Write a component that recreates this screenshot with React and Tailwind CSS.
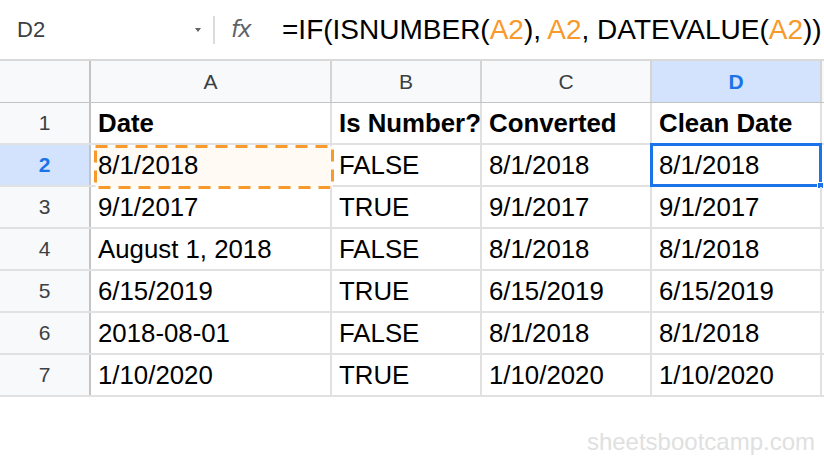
import React from 'react';

const cols = [
  { key: 'A', w: 'w-[241px]' },
  { key: 'B', w: 'w-[150px]' },
  { key: 'C', w: 'w-[170px]' },
  { key: 'D', w: 'w-[170px]' },
];

const rows = [
  ['Date', 'Is Number?', 'Converted', 'Clean Date'],
  ['8/1/2018', 'FALSE', '8/1/2018', '8/1/2018'],
  ['9/1/2017', 'TRUE', '9/1/2017', '9/1/2017'],
  ['August 1, 2018', 'FALSE', '8/1/2018', '8/1/2018'],
  ['6/15/2019', 'TRUE', '6/15/2019', '6/15/2019'],
  ['2018-08-01', 'FALSE', '8/1/2018', '8/1/2018'],
  ['1/10/2020', 'TRUE', '1/10/2020', '1/10/2020'],
];

const Ref = ({ children }) => <span className="text-[#f79a2b]">{children}</span>;

// copy marquee around A2
const Marquee = () => (
  <svg className="absolute left-[3px] top-[0px]" width="240" height="44" viewBox="0 0 240 44">
    <rect x="1.5" y="1.5" width="237" height="41" fill="#fffaf3" stroke="#f79a2b" strokeWidth="3" strokeDasharray="12 8" />
  </svg>
);

export default function App() {
  return (
    <div className="w-[824px] h-[458px] bg-white relative overflow-hidden font-['Liberation_Sans',Arial,sans-serif] text-black">
      {/* Formula bar */}
      <div className="h-[59px] flex items-center">
        <div className="w-[213px] flex items-center pl-[17px] pr-[12px] text-[22px] text-[#3c4043]">
          <span className="flex-1">D2</span>
          <span className="w-0 h-0 border-l-[3px] border-r-[3px] border-t-[4px] border-l-transparent border-r-transparent border-t-[#5f6368] mt-[1px]" />
        </div>
        <div className="w-[2px] h-[28px] bg-[#dadce0]" />
        <span className="ml-[16px] w-[51px] text-[23px] italic text-[#5f6368] font-['DejaVu_Sans',sans-serif] tracking-[-1px]">fx</span>
        <span className="text-[28px] whitespace-nowrap">
          =IF(ISNUMBER(<Ref>A2</Ref>), <Ref>A2</Ref>, DATEVALUE(<Ref>A2</Ref>))
        </span>
      </div>

      {/* Grid */}
      <div className="border-t-2 border-[#d9d9d9]">
        <div className="flex h-[42px] border-b border-[#c4c4c4] bg-[#f8f9fa]">
          <div className="w-[91px] border-r-2 border-[#c4c4c4]" />
          {cols.map(c => (
            <div
              key={c.key}
              className={`${c.w} flex items-center justify-center text-[21px] border-r-2 border-[#d4d4d4] ${
                c.key === 'D' ? 'bg-[#d3e3fd] text-[#1a73e8] font-bold' : 'text-[#3c4043]'
              }`}
            >
              {c.key}
            </div>
          ))}
        </div>
        {rows.map((r, i) => (
          <div key={i} className="flex h-[42px] border-b-2 border-[#e1e1e1]">
            <div
              className={`w-[91px] flex items-center justify-center text-[21px] border-r-2 border-[#c4c4c4] ${
                i === 1 ? 'bg-[#d3e3fd] text-[#1a73e8] font-bold' : 'bg-[#f8f9fa] text-[#3c4043]'
              }`}
            >
              {i + 1}
            </div>
            {r.map((v, j) => (
              <div
                key={j}
                className={`${cols[j].w} relative flex items-center pl-[7px] text-[25.8px] whitespace-nowrap overflow-visible border-r-2 border-[#e1e1e1] ${
                  i === 0 ? 'font-bold' : ''
                }`}
              >
                {i === 1 && j === 0 && <Marquee />}
                {i === 1 && j === 3 && (
                  <div className="absolute left-[-2px] top-[-2px] right-[-2px] bottom-[-2px] border-[3px] border-[#1a73e8]">
                    <div className="absolute right-[-5px] bottom-[-5px] w-[7px] h-[7px] bg-[#1a73e8] border border-white" />
                  </div>
                )}
                <span className="relative">{v}</span>
              </div>
            ))}
          </div>
        ))}
      </div>

      <div className="absolute right-[9px] top-[424px] text-[24px] text-[#e0e0e0]">sheetsbootcamp.com</div>
    </div>
  );
}
